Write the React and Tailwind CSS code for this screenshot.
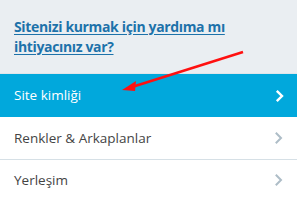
export default function App() {
  const font = { fontFamily: '"Open Sans", "Noto Sans", sans-serif' };
  const Chevron = ({ color, w = 2 }) => (
    <svg width="9" height="14" viewBox="0 0 9 14" fill="none">
      <path d="M1.8 1.8 L7 7 L1.8 12.2" stroke={color} strokeWidth={w} />
    </svg>
  );
  return (
    <div className="relative w-[297px] h-[200px] overflow-hidden bg-white" style={font}>
      <div className="h-[74px] bg-[#eaeef2] border-b border-[#dfe5ea] px-[14px] pt-[17px]">
        <a className="block text-[14px] font-bold leading-[20px] text-[#1d72aa] underline underline-offset-2 tracking-[-0.35px]">
          Sitenizi kurmak için yardıma mı<br />ihtiyacınız var?
        </a>
      </div>
      <div className="h-[43px] bg-[#01a8dc] flex items-center justify-between pl-[14px] pr-[13px] text-white text-[13.5px]">
        <span>Site kimliği</span>
        <Chevron color="#ffffff" w={2.4} />
      </div>
      <div className="h-[43px] border-b border-[#d6e0e6] flex items-center justify-between pl-[14px] pr-[14px] text-[#444] text-[13.5px]">
        <span>Renkler &amp; Arkaplanlar</span>
        <Chevron color="#aebdc7" />
      </div>
      <div className="h-[40px] flex items-center justify-between pl-[14px] pr-[14px] text-[#444] text-[13.5px]">
        <span>Yerleşim</span>
        <Chevron color="#aebdc7" />
      </div>
      <svg className="absolute left-0 top-0" width="297" height="200" viewBox="0 0 297 200">
        <line x1="243" y1="52" x2="132" y2="87" stroke="#ff1010" strokeWidth="2.5" />
        <polygon points="122,90 136,81 135,91" fill="#ff1010" />
      </svg>
    </div>
  );
}
